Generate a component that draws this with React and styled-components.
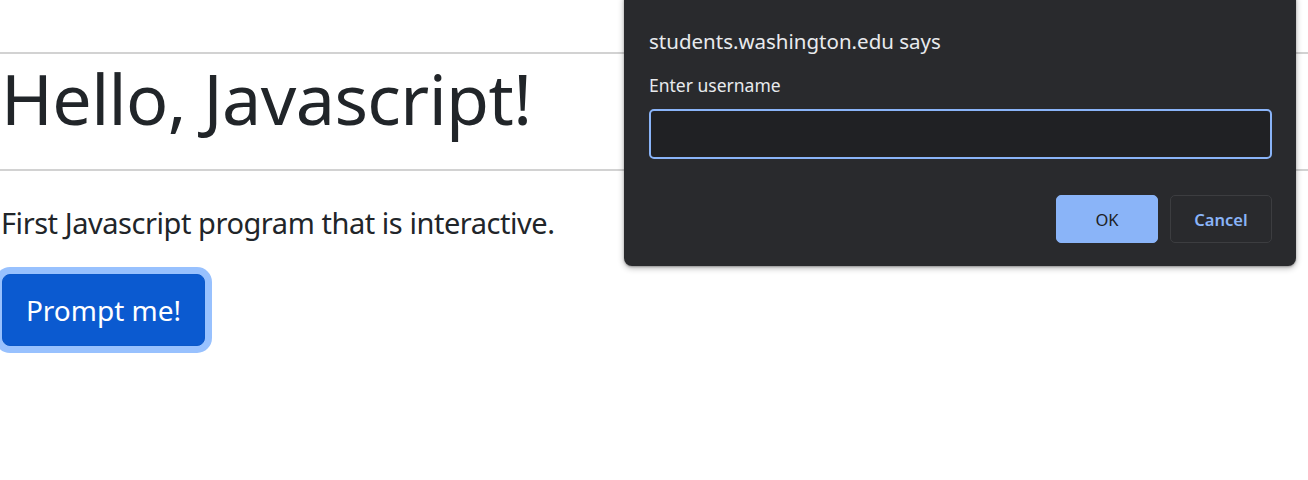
import styled, { createGlobalStyle } from "styled-components";

const Global = createGlobalStyle`
  html, body {
    margin: 0;
    padding: 0;
    background: #fff;
  }
  body {
    font-family: "Noto Sans", "Open Sans", sans-serif;
    color: #212529;
  }
`;

const Page = styled.div`
  position: relative;
  width: 1308px;
  height: 480px;
  overflow: hidden;
  padding-top: 52px;
  box-sizing: border-box;
`;

const Rule = styled.hr`
  margin: 0;
  border: 0;
  border-top: 2px solid #d2d2d2;
`;

const Heading = styled.h1`
  margin: 0;
  padding: 9px 0 36px 1px;
  font-size: 70px;
  font-weight: 400;
  letter-spacing: -0.6px;
  line-height: 70px;
`;

const Lead = styled.p`
  margin: 30px 0 0 1px;
  font-size: 29px;
  line-height: 44px;
  letter-spacing: -0.45px;
`;

const PromptButton = styled.button`
  display: block;
  margin: 29px 0 0 2px;
  width: 203px;
  height: 72px;
  border: 1px solid #0a58ca;
  border-radius: 8px;
  background: #0b5ad0;
  color: #fff;
  font-family: "Noto Sans", "Open Sans", sans-serif;
  font-size: 28px;
  box-shadow: 0 0 0 7px #98c1fe;
  cursor: pointer;
`;

const Dialog = styled.div`
  position: absolute;
  top: -8px;
  left: 624px;
  width: 672px;
  height: 274px;
  box-sizing: border-box;
  padding: 8px 24px 0 25px;
  background: #292a2d;
  border-radius: 8px;
  box-shadow: 0 2px 6px rgba(0, 0, 0, 0.3), 0 1px 2px rgba(0, 0, 0, 0.25);
  display: flex;
  flex-direction: column;
  font-family: "Noto Sans", "Open Sans", sans-serif;
`;

const Title = styled.div`
  margin-top: 27px;
  color: #e8eaed;
  font-size: 20.5px;
  line-height: 28px;
`;

const Label = styled.div`
  margin-top: 19px;
  color: #e8eaed;
  font-size: 17.5px;
  line-height: 22px;
`;

const Field = styled.input`
  margin-top: 13px;
  height: 50px;
  box-sizing: border-box;
  width: 100%;
  background: #202124;
  border: 2px solid #8ab4f8;
  border-radius: 5px;
  outline: none;
  color: #e8eaed;
  font-size: 16px;
  padding: 0 12px;
`;

const Actions = styled.div`
  margin-top: 36px;
  display: flex;
  justify-content: flex-end;
  gap: 12px;
`;

const DialogButton = styled.button`
  width: 102px;
  height: 48px;
  border-radius: 5px;
  font-family: "Noto Sans", "Open Sans", sans-serif;
  font-size: 16.5px;
  cursor: pointer;
  border: 1px solid ${(p) => (p.$primary ? "#8ab4f8" : "#3c3d40")};
  background: ${(p) => (p.$primary ? "#8ab4f8" : "#292a2d")};
  color: ${(p) => (p.$primary ? "#202124" : "#8ab4f8")};
  font-weight: ${(p) => (p.$primary ? 400 : 600)};
`;

const App = () => {
  return (
    <Page>
      <Global />
      <Rule />
      <Heading>Hello, Javascript!</Heading>
      <Rule />
      <Lead>First Javascript program that is interactive.</Lead>
      <PromptButton>Prompt me!</PromptButton>

      <Dialog>
        <Title>students.washington.edu says</Title>
        <Label>Enter username</Label>
        <Field type="text" />
        <Actions>
          <DialogButton $primary>OK</DialogButton>
          <DialogButton>Cancel</DialogButton>
        </Actions>
      </Dialog>
    </Page>
  );
};

export default App;
